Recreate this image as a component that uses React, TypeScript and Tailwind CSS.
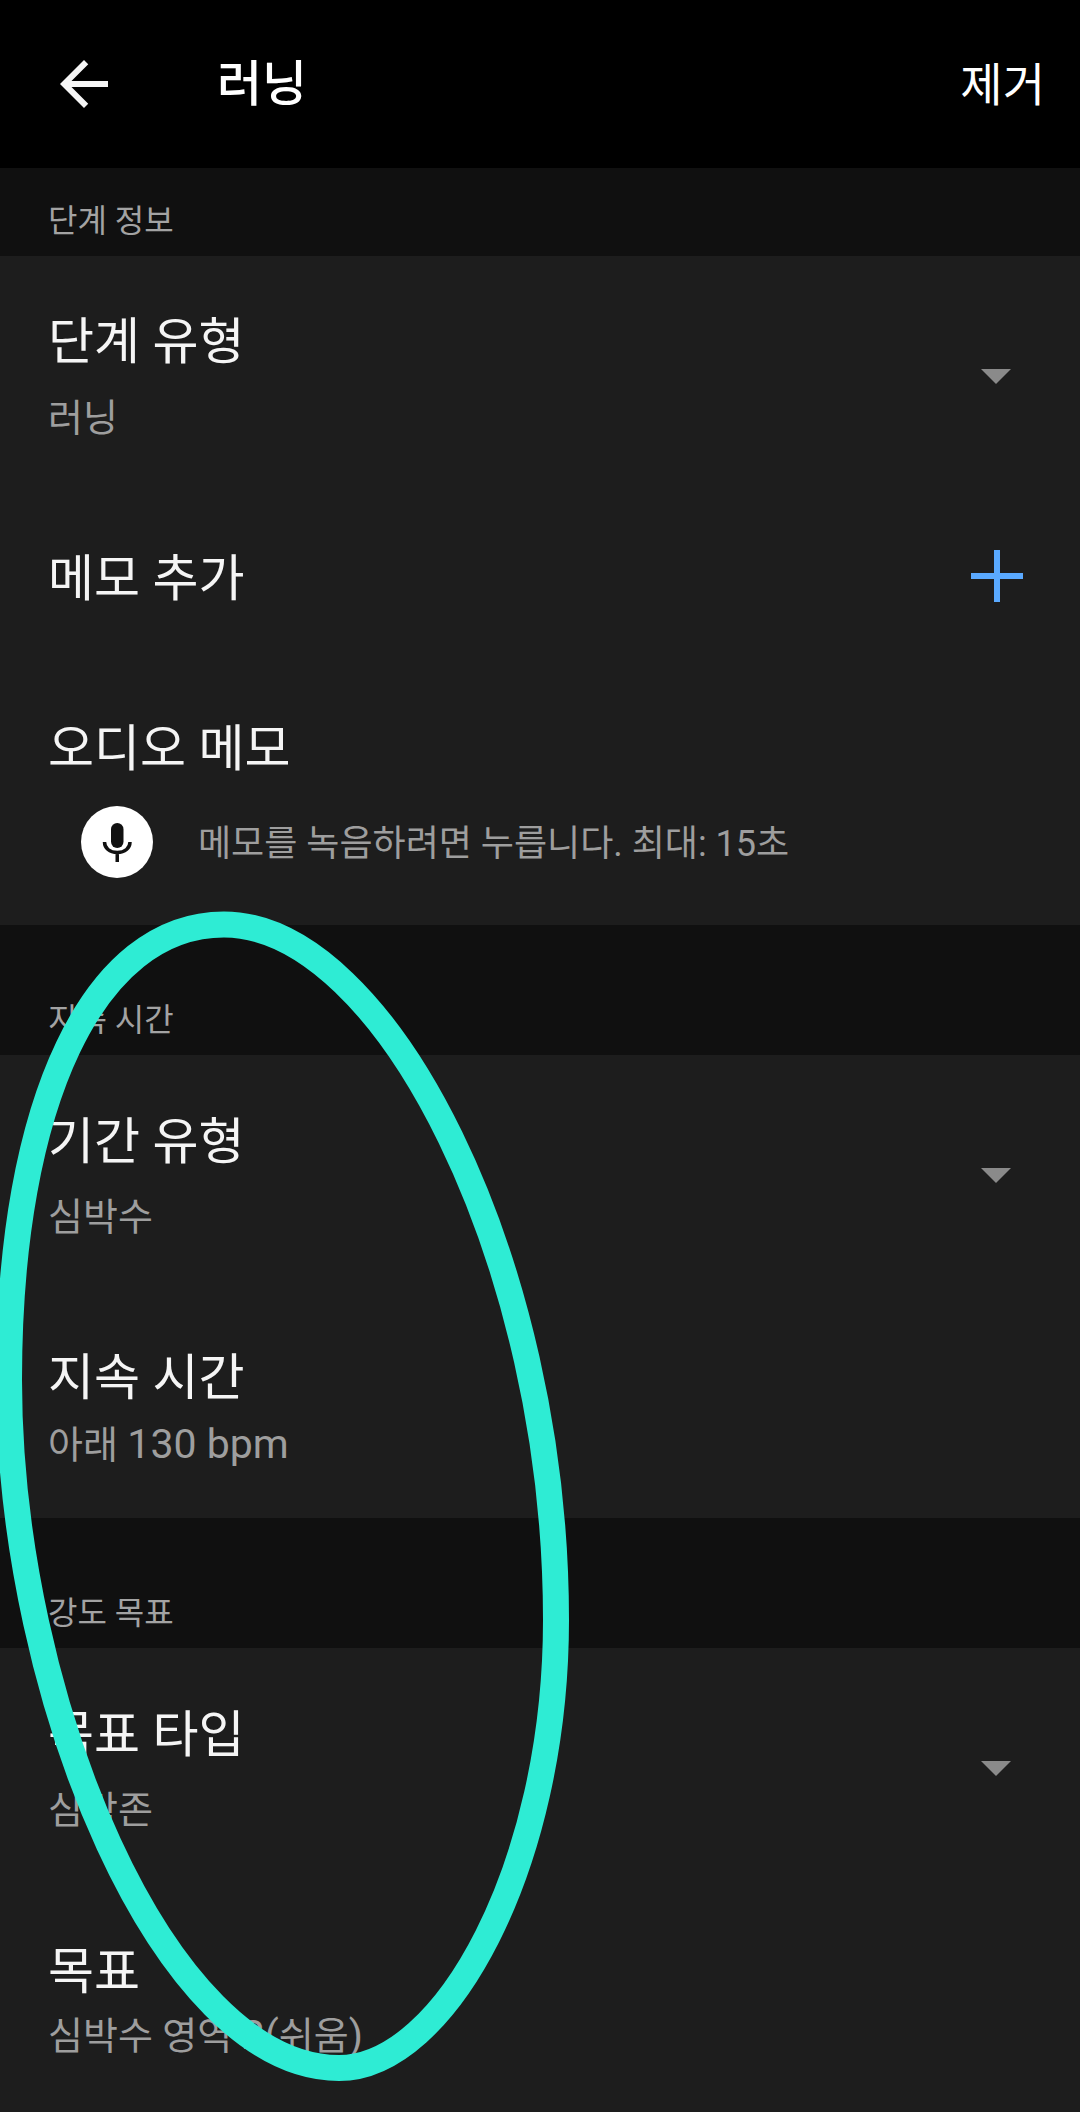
import React from 'react';

const fontStack = "font-['Roboto','Noto_Sans_CJK_KR',sans-serif]";

function Caret() {
  return <div className="mr-[69px] w-0 h-0 border-l-[15px] border-r-[15px] border-t-[15px] border-l-transparent border-r-transparent border-t-[#8a8a8a]" />;
}

function Row({ title, sub, caret, className, subClass }: { title: string; sub: React.ReactNode; caret?: boolean; className: string; subClass: string }) {
  return (
    <div className={`flex items-center justify-between pl-12 ${className}`}>
      <div className="flex flex-col">
        <div className="text-[50px] leading-[60px] text-[#f5f5f5]">{title}</div>
        <div className={`text-[38px] leading-[44px] text-[#9e9e9e] ${subClass}`}>{sub}</div>
      </div>
      {caret && <Caret />}
    </div>
  );
}

function SectionLabel({ text, className }: { text: string; className: string }) {
  return (
    <div className={`flex items-end pl-12 text-[32px] leading-[40px] text-[#a3a3a3] ${className}`}>{text}</div>
  );
}

export default function App() {
  return (
    <div className={`relative w-[1080px] h-[2112px] overflow-hidden bg-[#1d1d1d] ${fontStack}`}>
      {/* Header */}
      <div className="flex items-center h-[168px] bg-black pl-12 pr-[35px] text-white">
        <svg width="72" height="72" viewBox="0 0 24 24" fill="#f5f5f5" className="shrink-0">
          <path d="M20 11H7.83l5.59-5.59L12 4l-8 8 8 8 1.41-1.41L7.83 13H20v-2z" />
        </svg>
        <div className="ml-[97px] pt-[2px] text-[49px] leading-[60px] font-medium">러닝</div>
        <div className="ml-auto pt-[2px] text-[46px] leading-[60px]">제거</div>
      </div>

      <SectionLabel text="단계 정보" className="h-[88px] pb-[15px] bg-[#101010]" />
      <Row title="단계 유형" sub="러닝" caret className="h-[240px]" subClass="mt-[24px]" />
      <div className="flex items-center justify-between h-[160px] pl-12">
        <div className="pt-[5px] text-[50px] leading-[60px] text-[#f5f5f5]">메모 추가</div>
        <svg width="52" height="52" viewBox="0 0 52 52" className="mr-[57px]">
          <path d="M26 0V52M0 26H52" stroke="#5aa9ff" strokeWidth="6" />
        </svg>
      </div>
      <div className="h-[269px] pl-12 pt-[63px]">
        <div className="text-[50px] leading-[60px] text-[#f5f5f5]">오디오 메모</div>
        <div className="flex items-center mt-[27px] ml-[33px]">
          <div className="w-[72px] h-[72px] rounded-full bg-white">
            <svg width="72" height="72" viewBox="0 0 72 72" fill="none">
              <rect x="30" y="17" width="12.5" height="25" rx="6.25" fill="#111111" />
              <path d="M23.5 36c0 6 5 10.5 12.750 10.500s12.750-4.500 12.750-10.500M36.250 46v10" stroke="#111111" strokeWidth="3.500" />
            </svg>
          </div>
          <div className="ml-[45px] pt-[4px] text-[36px] leading-[44px] text-[#9e9e9e]">메모를 녹음하려면 누릅니다. 최대: 15초</div>
        </div>
      </div>

      <SectionLabel text="지속 시간" className="h-[130px] pb-[15px] bg-[#101010]" />
      <Row title="기간 유형" sub="심박수" caret className="h-[236px] pt-[4px]" subClass="mt-[23px]" />
      <Row title="지속 시간" sub={<>아래 <span className="text-[41px]">130 bpm</span></>} className="h-[227px] pt-[6px]" subClass="mt-[14px]" />

      <SectionLabel text="강도 목표" className="h-[130px] pb-[15px] bg-[#101010]" />
      <Row title="목표 타입" sub="심박존" caret className="h-[236px] pt-[4px]" subClass="mt-[23px]" />
      <Row
        title="목표"
        sub={<>심박수 영역 <span className="text-[41px]">2(</span>쉬움<span className="text-[41px]">)</span></>}
        className="h-[228px] pt-[4px]"
        subClass="mt-[11px]"
      />

      {/* Hand-drawn highlight over the content */}
      <svg width="1080" height="2112" viewBox="0 0 1080 2112" fill="none" className="absolute left-0 top-0">
        <path
          d="M224 924.5C385 924.5 556 1260 556 1620C556 1867 445 2068 339 2068C165 2068 9 1700 9 1380C9 1100 95 924.5 224 924.5Z"
          stroke="#2eecd4"
          strokeWidth="26"
        />
      </svg>
    </div>
  );
}
